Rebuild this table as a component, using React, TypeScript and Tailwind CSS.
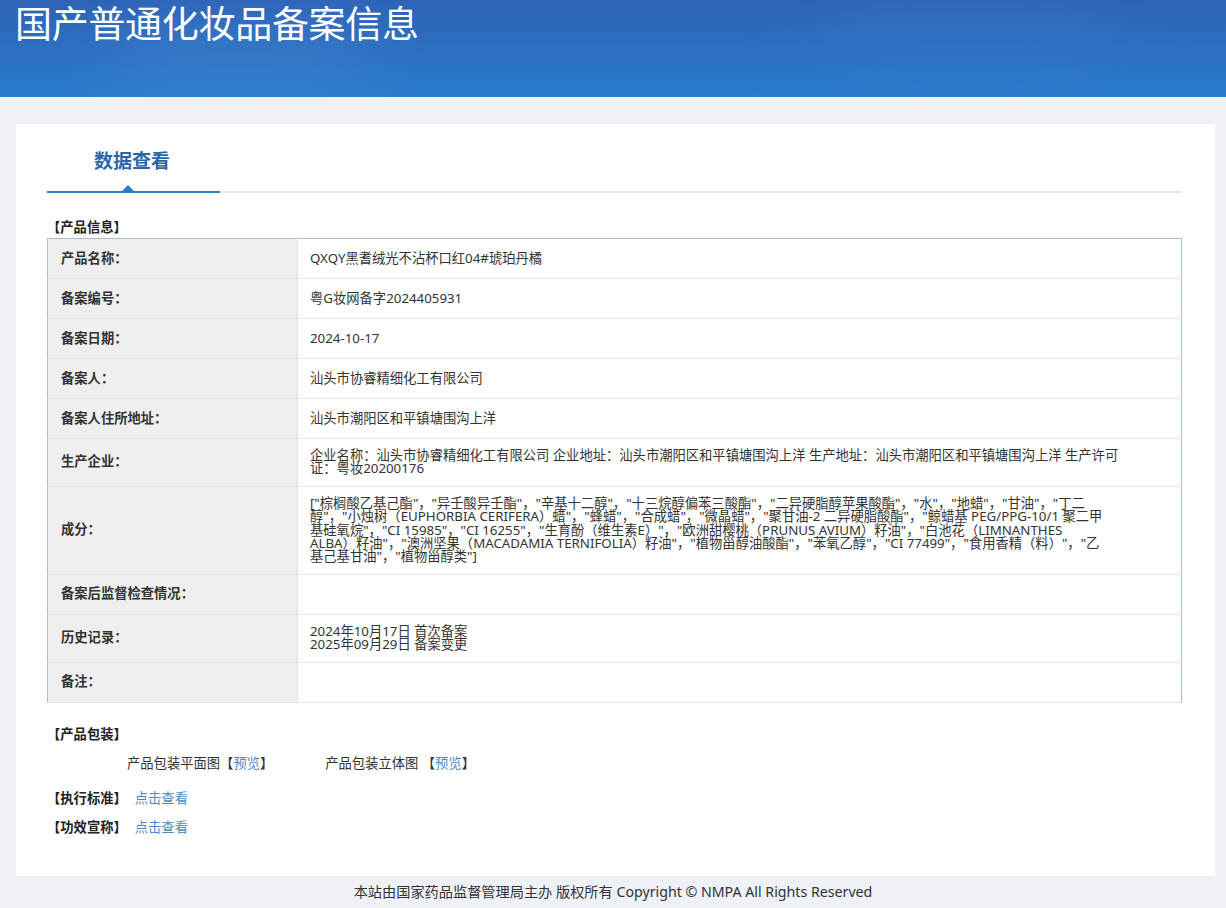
const font = { fontFamily: '"Noto Sans", "Noto Sans CJK SC", sans-serif' };

const ingredientLines = [
  '["棕榈酸乙基己酯"，"异壬酸异壬酯"，"辛基十二醇"，"十三烷醇偏苯三酸酯"，"二异硬脂醇苹果酸酯"，"水"，"地蜡"，"甘油"，"丁二',
  '醇"，"小烛树（EUPHORBIA CERIFERA）蜡"，"蜂蜡"，"合成蜡"，"微晶蜡"，"聚甘油-2 二异硬脂酸酯"，"鲸蜡基 PEG/PPG-10/1 聚二甲',
  '基硅氧烷"，"CI 15985"，"CI 16255"，"生育酚（维生素E）"，"欧洲甜樱桃（PRUNUS AVIUM）籽油"，"白池花（LIMNANTHES',
  'ALBA）籽油"，"澳洲坚果（MACADAMIA TERNIFOLIA）籽油"，"植物甾醇油酸酯"，"苯氧乙醇"，"CI 77499"，"食用香精（料）"，"乙',
  '基己基甘油"，"植物甾醇类"]',
];

const rows: { label: string; lines: string[] }[] = [
  { label: "产品名称：", lines: ["QXQY黑耆绒光不沾杯口红04#琥珀丹橘"] },
  { label: "备案编号：", lines: ["粤G妆网备字2024405931"] },
  { label: "备案日期：", lines: ["2024-10-17"] },
  { label: "备案人：", lines: ["汕头市协睿精细化工有限公司"] },
  { label: "备案人住所地址：", lines: ["汕头市潮阳区和平镇塘围沟上洋"] },
  {
    label: "生产企业：",
    lines: [
      "企业名称：汕头市协睿精细化工有限公司 企业地址：汕头市潮阳区和平镇塘围沟上洋 生产地址：汕头市潮阳区和平镇塘围沟上洋 生产许可",
      "证：粤妆20200176",
    ],
  },
  { label: "成分：", lines: ingredientLines },
  { label: "备案后监督检查情况：", lines: [] },
  { label: "历史记录：", lines: ["2024年10月17日 首次备案", "2025年09月29日 备案变更"] },
  { label: "备注：", lines: [] },
];

export default function App() {
  return (
    <div className="w-[1226px] min-h-[908px] bg-[#eef1f5] text-[#333]" style={font}>
      {/* Banner */}
      <div className="relative h-[97px] overflow-hidden bg-gradient-to-b from-[#2e63b6] to-[#2a7bcb]">
        <div className="absolute left-[110px] top-[30px] h-[80px] w-[260px] rounded-full bg-[#4a8ad6] opacity-40 blur-2xl" />
        <div className="absolute left-[820px] top-[10px] h-[60px] w-[300px] rounded-full bg-[#3b7ccc] opacity-40 blur-2xl" />
        <h1 className="relative pl-[15px] text-[37px] leading-[47px] font-normal tracking-[-0.3px] text-white">
          国产普通化妆品备案信息
        </h1>
      </div>

      {/* Card */}
      <div className="ml-[16px] mr-[11px] mt-[27px] h-[752px] bg-white pl-[31px] pr-[33px] pt-[28px]">
        {/* Tab */}
        <div>
          <div className="w-[170px] text-center text-[19px] leading-[19px] font-bold text-[#2a66a8]">数据查看</div>
          <div className="mt-[20px] flex h-[2px]">
            <div className="relative w-[173px] bg-[#2f7cc0]">
              <div className="absolute left-[75px] top-[-6px] h-0 w-0 border-x-[6px] border-b-[6px] border-x-transparent border-b-[#2f7cc0]" />
            </div>
            <div className="flex-1 bg-[#e6e6e6]" />
          </div>
        </div>

        <div className="mt-[27px] text-[13.3px] leading-[14px] font-bold text-[#222]">【产品信息】</div>

        <table className="mt-[4px] w-full border-collapse border border-[#a9bed6] text-[13.3px]">
          <tbody>
            {rows.map((r) => (
              <tr key={r.label} className="border-b border-[#e3e3e3]">
                <td className="h-[40px] w-[250px] border-r border-[#e3e3e3] bg-[#efefef] pl-[13px] align-middle font-bold text-[#333]">
                  {r.label}
                </td>
                <td className="h-[40px] py-[10px] pl-[12px] pr-[20px] align-middle leading-[13.4px] text-[#333]">
                  {r.lines.map((l, i) => (
                    <div key={i} className="whitespace-nowrap">
                      {l}
                    </div>
                  ))}
                </td>
              </tr>
            ))}
          </tbody>
        </table>

        <div className="mt-[24px] text-[13.3px] leading-[14px] font-bold text-[#222]">【产品包装】</div>
        <div className="mt-[15px] flex pl-[80px] text-[13.3px] leading-[14px]">
          <span>
            产品包装平面图【<span className="text-[#4b8ac4]">预览</span>】
          </span>
          <span className="ml-[52px]">
            产品包装立体图 【<span className="text-[#4b8ac4]">预览</span>】
          </span>
        </div>
        <div className="mt-[21px] flex items-center gap-[8px] text-[13.3px] leading-[14px]">
          <span className="font-bold text-[#222]">【执行标准】</span>
          <span className="text-[#4b8ac4]">点击查看</span>
        </div>
        <div className="mt-[15px] flex items-center gap-[8px] text-[13.3px] leading-[14px]">
          <span className="font-bold text-[#222]">【功效宣称】</span>
          <span className="text-[#4b8ac4]">点击查看</span>
        </div>
      </div>

      {/* Footer */}
      <div className="flex h-[32px] items-center justify-center text-[14.2px] text-[#333]">
        本站由国家药品监督管理局主办 版权所有 Copyright © NMPA All Rights Reserved
      </div>
    </div>
  );
}
